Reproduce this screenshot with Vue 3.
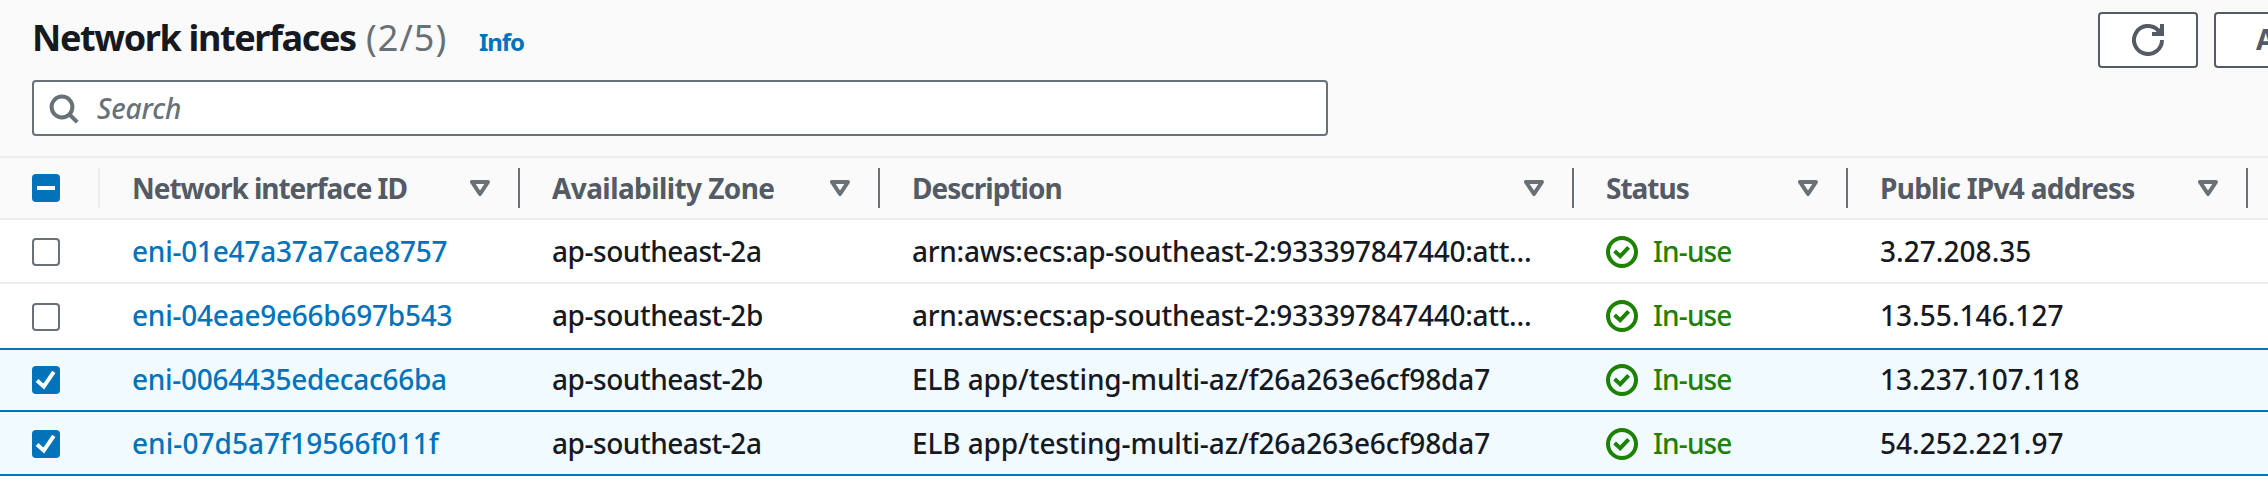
<script setup>
const columns = [
  { key: 'id', label: 'Network interface ID' },
  { key: 'zone', label: 'Availability Zone' },
  { key: 'description', label: 'Description' },
  { key: 'status', label: 'Status' },
  { key: 'ip', label: 'Public IPv4 address' },
]
const rows = [
  { id: 'eni-01e47a37a7cae8757', zone: 'ap-southeast-2a', description: 'arn:aws:ecs:ap-southeast-2:933397847440:att…', status: 'In-use', ip: '3.27.208.35', selected: false },
  { id: 'eni-04eae9e66b697b543', zone: 'ap-southeast-2b', description: 'arn:aws:ecs:ap-southeast-2:933397847440:att…', status: 'In-use', ip: '13.55.146.127', selected: false },
  { id: 'eni-0064435edecac66ba', zone: 'ap-southeast-2b', description: 'ELB app/testing-multi-az/f26a263e6cf98da7', status: 'In-use', ip: '13.237.107.118', selected: true },
  { id: 'eni-07d5a7f19566f011f', zone: 'ap-southeast-2a', description: 'ELB app/testing-multi-az/f26a263e6cf98da7', status: 'In-use', ip: '54.252.221.97', selected: true },
]
</script>

<template>
  <main class="panel">
    <header class="top">
      <div class="title-bar">
        <h2 class="title">Network interfaces</h2>
        <span class="count">(2/5)</span>
        <a class="info">Info</a>
        <div class="actions">
          <button class="btn" aria-label="Refresh">
            <svg width="32" height="32" viewBox="0 0 32 32" fill="none" stroke="#545b64" stroke-width="4">
              <path d="M30 16A14 14 0 1 1 26 6.2L29 9" />
              <path d="M30 0V10H20" />
              <path d="M22 10L30 2V10Z" fill="#545b64" stroke="none" />
            </svg>
          </button>
          <button class="btn btn-actions">Actions</button>
        </div>
      </div>
      <div class="search">
        <svg width="30" height="30" viewBox="0 0 30 30" fill="none" stroke="#687078" stroke-width="4">
          <circle cx="13" cy="13" r="10.4" />
          <path d="M20 20L28.2 28.2" />
        </svg>
        <span>Search</span>
      </div>
    </header>

    <div class="grid head">
      <div class="cell check-cell">
        <span class="box on">
          <svg width="28" height="28" viewBox="0 0 28 28"><path d="M5 14H23" stroke="#fff" stroke-width="4" /></svg>
        </span>
      </div>
      <div v-for="c in columns" :key="c.key" class="cell" :class="'h-' + c.key">
        <span class="label">{{ c.label }}</span>
        <svg class="sort" width="20" height="16" viewBox="0 0 20 16">
          <path d="M2 2H18L10 14Z" fill="none" stroke="#687078" stroke-width="4" stroke-linejoin="round" />
        </svg>
      </div>
    </div>

    <div v-for="r in rows" :key="r.id" class="grid row" :class="{ selected: r.selected }">
      <div class="cell check-cell">
        <span class="box" :class="{ on: r.selected }">
          <svg v-if="r.selected" width="28" height="28" viewBox="0 0 28 28">
            <path d="M5 14.5L11.8 20.5L21.8 5.8" fill="none" stroke="#fff" stroke-width="4" />
          </svg>
        </span>
      </div>
      <div class="cell"><a class="id">{{ r.id }}</a></div>
      <div class="cell zone">{{ r.zone }}</div>
      <div class="cell description">{{ r.description }}</div>
      <div class="cell status">
        <svg width="32" height="32" viewBox="0 0 32 32" fill="none" stroke="#1d8102" stroke-width="4">
          <circle cx="16" cy="16" r="14" />
          <path d="M8.6 15L14.2 20.2L22.6 11.4" />
        </svg>
        <span>{{ r.status }}</span>
      </div>
      <div class="cell ip">{{ r.ip }}</div>
    </div>
  </main>
</template>

<style>
body { background: #fff; overflow: hidden; }
</style>

<style scoped>
.panel {
  width: 2268px;
  height: 490px;
  overflow: hidden;
  background: #fff;
  color: #16191f;
  font: 500 28px/40px "Noto Sans", "Open Sans", sans-serif;
  white-space: nowrap;
}
.top {
  box-sizing: border-box;
  height: 156px;
  padding: 12px 0 0 32px;
  background: #fafafa;
}
.title-bar { display: flex; height: 56px; overflow: hidden; }
.title {
  margin: 0;
  width: 334px;
  font-size: 36px;
  font-weight: 700;
  line-height: 52px;
  letter-spacing: -1.37px;
}
.count {
  width: 113px;
  color: #687078;
  font-size: 36px;
  font-weight: 400;
  line-height: 52px;
  letter-spacing: 1px;
}
.info {
  color: #0073bb;
  font-size: 24px;
  font-weight: 700;
  line-height: 59px;
  letter-spacing: -1.1px;
}
.actions { display: flex; gap: 16px; margin-left: auto; margin-right: -80px; }
.btn {
  box-sizing: border-box;
  display: flex;
  align-items: center;
  justify-content: center;
  width: 100px;
  height: 56px;
  padding: 0 0 2px;
  border: 2px solid #545b64;
  border-radius: 4px;
  background: #fff;
  color: #545b64;
  font: 700 28px/48px "Noto Sans", sans-serif;
}
.btn svg { margin-top: 2px; }
.btn-actions { width: 134px; justify-content: flex-start; padding-left: 40px; }
.search {
  box-sizing: border-box;
  display: flex;
  align-items: center;
  gap: 18px;
  width: 1296px;
  height: 56px;
  margin-top: 12px;
  padding-left: 15px;
  border: 2px solid #687078;
  border-radius: 4px;
  background: #fff;
  color: #687078;
  font-style: italic;
  letter-spacing: -0.1px;
}
.search svg { margin-top: 1px; }
.grid {
  box-sizing: border-box;
  display: grid;
  grid-template-columns: 100px 420px 360px 694px 274px 400px 1fr;
}
.cell { display: flex; align-items: center; padding-left: 32px; box-sizing: border-box; }
.head {
  height: 64px;
  border-top: 2px solid #eaeded;
  border-bottom: 2px solid #eaeded;
  background: #fafafa;
  color: #545b64;
  font-weight: 700;
}
.head .cell {
  height: 40px;
  margin: 10px 0;
  justify-content: space-between;
  padding-right: 28px;
  border-right: 2px solid #687078;
}
.head .check-cell { border-color: #eaeded; padding-right: 0; justify-content: flex-start; width: 100px; }
.label { margin-top: -1px; }
.h-id { letter-spacing: -1.04px; }
.h-zone { letter-spacing: -0.59px; }
.h-description { letter-spacing: -0.98px; }
.h-status { letter-spacing: -1px; }
.h-ip { letter-spacing: -0.72px; }
.row { height: 64px; border-bottom: 2px solid #eaeded; }
.row:nth-of-type(3) { height: 66px; padding-bottom: 2px; border-color: #0073bb; }
.row.selected { background: #f1faff; border-color: #0073bb; }
.row:nth-of-type(4) { height: 62px; padding-bottom: 2px; }
.box {
  box-sizing: border-box;
  display: flex;
  width: 28px;
  height: 28px;
  margin-top: 2px;
  border: 2px solid #687078;
  border-radius: 4px;
  background: #fff;
}
.head .box { margin-top: 0; }
.row:nth-of-type(3) .box { margin-top: 4px; }
.box.on { border: 0; background: #0073bb; }
.id { color: #0073bb; letter-spacing: -0.24px; }
.row:nth-of-type(4) .id { letter-spacing: -0.28px; }
.row:nth-of-type(5) .id { letter-spacing: 0.05px; }
.zone { letter-spacing: -0.46px; }
.description { letter-spacing: -0.28px; }
.selected .description { letter-spacing: -0.11px; }
.status { color: #1d8102; gap: 15px; letter-spacing: -0.85px; }
.status svg { margin-top: 2px; }
.ip { letter-spacing: 0.04px; }
</style>
